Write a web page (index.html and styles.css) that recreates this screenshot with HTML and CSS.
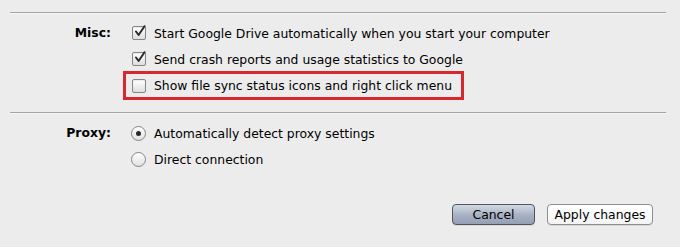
FILE: index.html
```html
<!DOCTYPE html>
<html lang="en">
<head>
  <meta charset="UTF-8">
  <title>Preferences</title>
  <link rel="stylesheet" href="styles.css">
</head>
<body>
  <div class="rule"></div>

  <!-- Misc -->
  <div class="field misc">
    <div class="label">Misc:</div>
    <div class="options">
      <div class="option">
        <span class="check on"><svg width="13" height="13" viewBox="0 0 13 13"><path d="M3 6.5 L5.6 10 L11.5 1.2" fill="none" stroke="#2b2b2b" stroke-width="2" stroke-linecap="round" stroke-linejoin="round"/></svg></span>
        <span>Start Google Drive automatically when you start your computer</span>
      </div>
      <div class="option">
        <span class="check on"><svg width="13" height="13" viewBox="0 0 13 13"><path d="M3 6.5 L5.6 10 L11.5 1.2" fill="none" stroke="#2b2b2b" stroke-width="2" stroke-linecap="round" stroke-linejoin="round"/></svg></span>
        <span>Send crash reports and usage statistics to Google</span>
      </div>
      <div class="option highlight">
        <span class="check"></span>
        <span>Show file sync status icons and right click menu</span>
      </div>
    </div>
  </div>

  <div class="rule"></div>

  <!-- Proxy -->
  <div class="field proxy">
    <div class="label">Proxy:</div>
    <div class="options">
      <div class="option">
        <span class="radio on"></span>
        <span>Automatically detect proxy settings</span>
      </div>
      <div class="option">
        <span class="radio"></span>
        <span>Direct connection</span>
      </div>
    </div>
  </div>

  <!-- Boutons -->
  <div class="buttons">
    <button class="btn default">Cancel</button>
    <button class="btn">Apply changes</button>
  </div>
</body>
</html>
```

FILE: styles.css
```css
/* Base */
* {
  margin: 0;
  padding: 0;
  box-sizing: border-box;
}
body {
  background: #ececec;
  font-family: 'DejaVu Sans', sans-serif;
  font-size: 12.4px;
  color: #000;
  width: 680px;
  height: 247px;
  overflow: hidden;
}
/* Separator lines */
.rule {
  margin: 12px 14px 0 10px;
  height: 1px;
  background: #a4a4a4;
  box-shadow: 0 1px 0 #f6f6f6;
}
/* Label + options */
.field {
  display: grid;
  grid-template-columns: 111px auto;
  column-gap: 21px;
  align-items: start;
}
.misc {
  margin-top: 7px;
}
.proxy {
  margin-top: 7px;
}
.label {
  text-align: right;
  font-weight: bold;
  line-height: 26px;
}
.options {
  display: flex;
  flex-direction: column;
  align-items: flex-start;
}
.option {
  display: flex;
  align-items: center;
  gap: 9px;
  height: 26px;
  white-space: nowrap;
}
/* Red highlight box */
.option.highlight {
  height: 29px;
  margin-top: -1px;
  margin-left: -9px;
  padding: 0 9px 0 6px;
  border: 3px solid #d7282f;
}
/* Checkbox */
.check {
  width: 14px;
  height: 14px;
  border: 1px solid #858585;
  border-radius: 2px;
  background: linear-gradient(#ffffff, #dedede);
  box-shadow: inset 0 1px 1px rgba(0, 0, 0, 0.08);
  position: relative;
  flex: none;
  margin-right: -1px;
}
.check svg {
  position: absolute;
  left: 0;
  top: -2px;
}
/* Radio */
.radio {
  width: 15px;
  height: 15px;
  border: 1px solid #858585;
  border-radius: 50%;
  background: linear-gradient(#ffffff, #e0e0e0);
  display: flex;
  align-items: center;
  justify-content: center;
  flex: none;
  margin-left: -1px;
  margin-right: -1px;
}
.radio.on::after {
  content: "";
  width: 5px;
  height: 5px;
  border-radius: 50%;
  background: #2a2a2a;
}
/* Buttons */
.buttons {
  display: flex;
  justify-content: flex-end;
  gap: 12px;
  margin-top: 32px;
  padding-right: 27px;
}
.btn {
  height: 21px;
  font-family: 'DejaVu Sans', sans-serif;
  font-size: 12.4px;
  color: #000;
  border: 1px solid #8e8e8e;
  border-radius: 4px;
  background: linear-gradient(#ffffff, #f3f3f3);
  box-shadow: 0 1px 0 rgba(0, 0, 0, 0.08);
  width: 106px;
}
.btn.default {
  width: 83px;
  border-color: #50545c;
  background: linear-gradient(#d3dae6, #a6b0c2 55%, #95a0b5);
}
```
